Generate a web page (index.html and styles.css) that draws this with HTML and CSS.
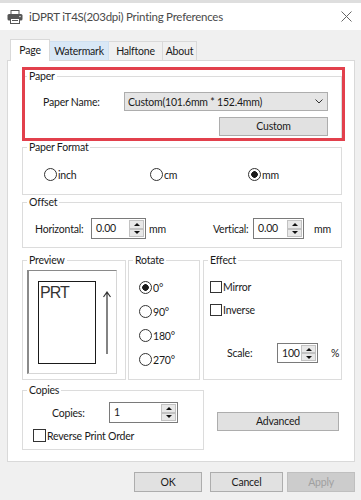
FILE: index.html
```html
<!DOCTYPE html>
<html lang="en">
<head>
    <meta charset="UTF-8">
    <title>Printing Preferences</title>
    <link rel="stylesheet" href="styles.css">
</head>
<body>
    <div class="window">
        <!-- Title bar -->
        <div class="titlebar">
            <svg class="app-icon" width="16" height="14" viewBox="0 0 16 14">
                <rect x="4" y="0.5" width="8" height="4" fill="#fff" stroke="#555"/>
                <rect x="0.5" y="4" width="15" height="6.5" rx="1.5" fill="#555"/>
                <rect x="3.5" y="8.5" width="9" height="5" fill="#fff" stroke="#555"/>
                <line x1="5" y1="10.5" x2="11" y2="10.5" stroke="#555"/>
                <circle cx="13" cy="6.5" r="0.8" fill="#ddd"/>
            </svg>
            <span class="title">iDPRT iT4S(203dpi) Printing Preferences</span>
            <svg class="close" width="11" height="11" viewBox="0 0 11 11">
                <path d="M0.5 0.5 L10.5 10.5 M10.5 0.5 L0.5 10.5" stroke="#666" stroke-width="1"/>
            </svg>
        </div>

        <!-- Tabs -->
        <div class="tabs">
            <div class="tab tab-page active">Page</div>
            <div class="tab tab-watermark hover">Watermark</div>
            <div class="tab tab-halftone">Halftone</div>
            <div class="tab tab-about">About</div>
        </div>

        <div class="panel">
            <!-- Paper section -->
            <div class="highlight">
                <fieldset class="group paper">
                    <legend>Paper</legend>
                    <div class="group-body">
                        <div class="row">
                            <span class="label paper-label">Paper Name:</span>
                            <div class="select">
                                <span>Custom(101.6mm * 152.4mm)</span>
                                <svg width="8" height="5" viewBox="0 0 8 5">
                                    <path d="M0.5 0.5 L4 4 L7.5 0.5" fill="none" stroke="#333"/>
                                </svg>
                            </div>
                        </div>
                        <div class="row row-end">
                            <div class="btn btn-custom">Custom</div>
                        </div>
                    </div>
                </fieldset>
            </div>

            <!-- Paper format -->
            <fieldset class="group format">
                <legend>Paper Format</legend>
                <div class="group-body">
                    <div class="row">
                        <label class="option opt-inch"><span class="radio"></span>inch</label>
                        <label class="option opt-cm"><span class="radio"></span>cm</label>
                        <label class="option"><span class="radio checked"></span>mm</label>
                    </div>
                </div>
            </fieldset>

            <!-- Offset -->
            <fieldset class="group offset">
                <legend>Offset</legend>
                <div class="group-body">
                    <div class="row">
                        <div class="field field-h">
                            <span class="label label-h">Horizontal:</span>
                            <div class="spin spin-h">
                                <span class="value">0.00</span>
                                <div class="arrows"><span class="up"></span><span class="down"></span></div>
                            </div>
                            <span class="unit">mm</span>
                        </div>
                        <div class="field">
                            <span class="label label-v">Vertical:</span>
                            <div class="spin spin-v">
                                <span class="value">0.00</span>
                                <div class="arrows"><span class="up"></span><span class="down"></span></div>
                            </div>
                            <span class="unit unit-v">mm</span>
                        </div>
                    </div>
                </div>
            </fieldset>

            <!-- Preview / Rotate / Effect -->
            <div class="middle">
                <fieldset class="group preview">
                    <legend>Preview</legend>
                    <div class="group-body">
                        <div class="frame">
                            <div class="sheet">PRT</div>
                            <svg class="arrow" width="8" height="66" viewBox="0 0 8 66">
                                <path d="M4 2 L4 64 M0.5 7 L4 2 L7.5 7" fill="none" stroke="#333" stroke-width="1.2"/>
                            </svg>
                        </div>
                    </div>
                </fieldset>

                <fieldset class="group rotate">
                    <legend>Rotate</legend>
                    <div class="group-body">
                        <label class="option stack"><span class="radio checked"></span>0°</label>
                        <label class="option stack"><span class="radio"></span>90°</label>
                        <label class="option stack"><span class="radio"></span>180°</label>
                        <label class="option stack"><span class="radio"></span>270°</label>
                    </div>
                </fieldset>

                <fieldset class="group effect">
                    <legend>Effect</legend>
                    <div class="group-body">
                        <label class="option check-row"><span class="checkbox"></span>Mirror</label>
                        <label class="option check-row"><span class="checkbox"></span>Inverse</label>
                        <div class="row scale-row">
                            <span class="label label-scale">Scale:</span>
                            <div class="spin spin-scale">
                                <span class="value">100</span>
                                <div class="arrows"><span class="up"></span><span class="down"></span></div>
                            </div>
                            <span class="unit unit-pct">%</span>
                        </div>
                    </div>
                </fieldset>
            </div>

            <!-- Copies -->
            <div class="bottom">
                <fieldset class="group copies">
                    <legend>Copies</legend>
                    <div class="group-body">
                        <div class="row copies-row">
                            <span class="label label-copies">Copies:</span>
                            <div class="spin spin-copies">
                                <span class="value">1</span>
                                <div class="arrows"><span class="up"></span><span class="down"></span></div>
                            </div>
                        </div>
                        <label class="option reverse"><span class="checkbox big"></span>Reverse Print Order</label>
                    </div>
                </fieldset>
                <div class="btn btn-advanced">Advanced</div>
            </div>
        </div>

        <!-- Dialog buttons -->
        <div class="footer">
            <div class="btn btn-ok">OK</div>
            <div class="btn btn-cancel">Cancel</div>
            <div class="btn btn-apply disabled">Apply</div>
        </div>
    </div>
</body>
</html>
```

FILE: styles.css
```css
body {
    margin: 0;
    background: #f0f0f0;
    font-family: Lato, "Noto Sans", sans-serif;
    font-size: 10.5px;
    letter-spacing: -0.2px;
    color: #1a1a1a;
}

.window {
    width: 361px;
    height: 500px;
    border-top: 3px solid #dedede;
    box-sizing: border-box;
    overflow: hidden;
}

/* Title bar */
.titlebar {
    height: 27px;
    background: #fff;
    display: flex;
    align-items: center;
    padding-left: 7px;
}

.title {
    margin-left: 6px;
    font-size: 11.5px;
    letter-spacing: -0.25px;
    color: #4a4a4a;
}

.close {
    margin-left: auto;
    margin-right: 9px;
}

/* Tabs */
.tabs {
    display: flex;
    align-items: flex-end;
    height: 21px;
    margin-top: 9px;
    padding-left: 10px;
}

.tab {
    height: 19px;
    line-height: 18px;
    box-sizing: border-box;
    text-align: center;
    border: 1px solid #d9d9d9;
    border-bottom: none;
    border-left: none;
    background: #f0f0f0;
}

.tab-page { width: 40px; }
.tab-watermark { width: 59px; }
.tab-halftone { width: 54px; }
.tab-about { width: 34px; }

.tab.active {
    height: 22px;
    line-height: 20px;
    background: #fff;
    border-left: 1px solid #d9d9d9;
    margin-bottom: -1px;
    position: relative;
    z-index: 1;
}

.tab.hover {
    background: #d9e8f6;
    border-color: #cfe0f0;
}

/* Panel */
.panel {
    margin-left: 7px;
    width: 348px;
    height: 402px;
    box-sizing: border-box;
    background: #fff;
    border: 1px solid #d9d9d9;
    padding: 8px 12px 0 14px;
}

/* Group boxes */
.group {
    margin: 0;
    padding: 0;
    border: 1px solid #dcdcdc;
    min-width: 0;
}

.group legend {
    margin-left: 4px;
    padding: 0 2px;
    line-height: 14px;
}

.row {
    display: flex;
    align-items: center;
}

.row-end {
    justify-content: flex-end;
}

.label {
    flex: none;
}

/* Paper */
.highlight {
    position: relative;
}

.highlight::after {
    content: "";
    position: absolute;
    top: -2px;
    left: 0;
    right: -3px;
    bottom: -2px;
    border: 3px solid #e2404c;
    pointer-events: none;
}

.paper .group-body {
    padding: 9px 13px 2px 20px;
}

.paper-label {
    width: 81px;
}

.select {
    width: 204px;
    height: 19px;
    box-sizing: border-box;
    border: 1px solid #adadad;
    background: #e5e5e5;
    display: flex;
    align-items: center;
    justify-content: space-between;
    padding: 0 4px 0 3px;
}

.btn {
    height: 19px;
    box-sizing: border-box;
    border: 1px solid #adadad;
    background: #e1e1e1;
    text-align: center;
    line-height: 17px;
}

.btn-custom {
    width: 109px;
    margin-top: 6px;
}

/* Radios and checkboxes */
.option {
    display: flex;
    align-items: center;
}

.radio {
    width: 13px;
    height: 13px;
    box-sizing: border-box;
    border: 1px solid #333;
    border-radius: 50%;
    background: #fff;
    margin-right: 1px;
    flex: none;
}

.radio.checked {
    background: radial-gradient(circle, #1a1a1a 0 3px, #fff 3.6px);
}

.checkbox {
    width: 12px;
    height: 12px;
    box-sizing: border-box;
    border: 1px solid #333;
    background: #fff;
    margin-right: 1px;
    flex: none;
}

.checkbox.big {
    width: 13px;
    height: 13px;
}

/* Paper format */
.format {
    margin-top: 1px;
}

.format .group-body {
    padding: 14px 0 13px 21px;
}

.opt-inch { width: 106px; }
.opt-cm { width: 98px; }

/* Offset */
.offset .group-body {
    padding: 9px 0 8px 12px;
}

.field {
    display: flex;
    align-items: center;
}

.field-h {
    width: 178px;
}

.label-h { width: 56px; }
.label-v { width: 40px; }

.spin {
    display: flex;
    height: 21px;
    box-sizing: border-box;
    border: 1px solid #7a7a7a;
    background: #fff;
}

.spin .value {
    flex: 1;
    padding-left: 4px;
    line-height: 19px;
}

.arrows {
    width: 15px;
    display: flex;
    flex-direction: column;
    margin: 1px 1px 1px 0;
}

.arrows span {
    flex: 1;
    background: #e8e8e8;
    border: 1px solid #c2c2c2;
    display: flex;
    align-items: center;
    justify-content: center;
}

.arrows .up::after,
.arrows .down::after {
    content: "";
    border-left: 3px solid transparent;
    border-right: 3px solid transparent;
}

.arrows .up::after {
    border-bottom: 3px solid #111;
}

.arrows .down::after {
    border-top: 3px solid #111;
}

.spin-h { width: 55px; }
.spin-v { width: 51px; }

.unit {
    margin-left: 3px;
}

.unit-v {
    margin-left: 10px;
}

/* Preview / Rotate / Effect */
.middle {
    display: flex;
    height: 127px;
    margin-top: 5px;
}

.preview { width: 102px; margin-right: 2px; }
.rotate { width: 70px; margin-right: 3px; }
.effect { width: 137px; }

.frame {
    width: 90px;
    height: 104px;
    box-sizing: border-box;
    margin: 3px 0 0 4px;
    border-top: 1px solid #8a8a8a;
    border-left: 2px solid #8a8a8a;
    border-right: 1px solid #d6d6d6;
    border-bottom: 1px solid #d6d6d6;
    display: flex;
    align-items: flex-start;
    padding: 10px 0 0 9px;
}

.sheet {
    width: 58px;
    height: 83px;
    box-sizing: border-box;
    border: 1px solid #1a1a1a;
    font-family: "Liberation Sans", Arial, sans-serif;
    font-size: 16px;
    letter-spacing: -1px;
    line-height: 17px;
    color: #333;
    padding: 2px 0 0 1px;
}

.arrow {
    margin: 9px 0 0 7px;
}

.rotate .group-body {
    padding: 14px 0 0 10px;
}

.stack {
    height: 13px;
    margin-bottom: 11px;
}

.effect .group-body {
    padding: 14px 0 0 6px;
}

.check-row {
    height: 12px;
    margin-bottom: 11px;
}

.scale-row {
    margin-top: 27px;
    padding-left: 17px;
}

.label-scale { width: 50px; }

.spin-scale {
    width: 41px;
    height: 20px;
}

.spin-scale .value {
    line-height: 18px;
}

.unit-pct {
    margin-left: 13px;
}

/* Copies */
.bottom {
    display: flex;
    align-items: flex-start;
    margin-top: 3px;
}

.copies {
    width: 180px;
    height: 65px;
}

.copies .group-body {
    padding: 5px 0 0 10px;
}

.copies-row {
    margin-left: 19px;
}

.label-copies { width: 57px; }

.spin-copies { width: 69px; }

.reverse {
    margin-top: 6px;
}

.btn-advanced {
    width: 122px;
    margin: 29px 0 0 13px;
}

/* Footer */
.footer {
    display: flex;
    justify-content: flex-end;
    padding: 10px 6px 0 0;
}

.footer .btn {
    height: 20px;
    line-height: 18px;
}

.btn-ok { width: 68px; }
.btn-cancel { width: 73px; margin-left: 8px; }
.btn-apply { width: 68px; margin-left: 4px; }

.btn.disabled {
    background: #cccccc;
    border-color: #bfbfbf;
    color: #a0a0a0;
}
```
